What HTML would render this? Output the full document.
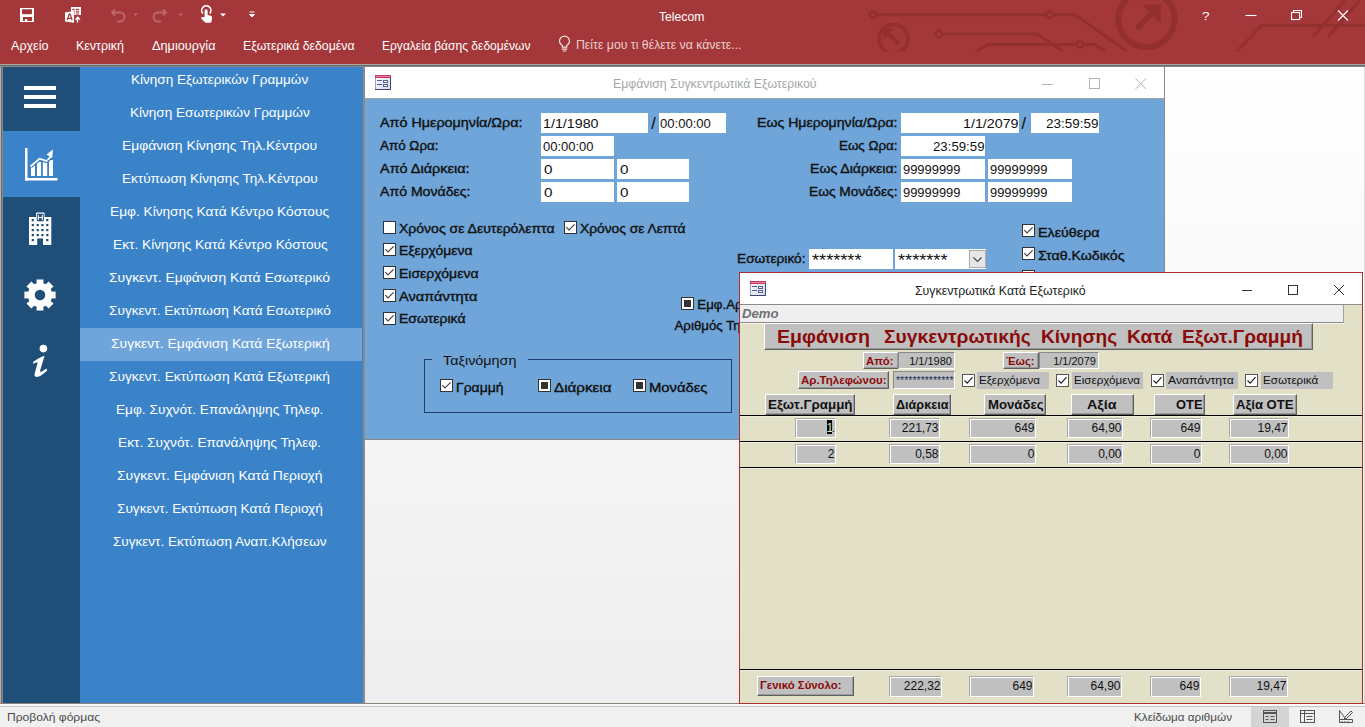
<!DOCTYPE html>
<html><head><meta charset="utf-8"><style>
html,body{margin:0;padding:0;width:1365px;height:727px;overflow:hidden;background:#fff;position:relative}
body>div,body>span,body>svg{position:absolute;box-sizing:border-box}
.t{white-space:pre;transform-origin:0 0;display:block}
</style></head><body>
<div style="left:0px;top:0px;width:1365px;height:64px;background:#A4373A"></div>
<svg style="left:0;top:0" width="1365" height="64" viewBox="0 0 1365 64">
<defs><clipPath id="cp"><rect x="0" y="0" width="1365" height="51.5"/></clipPath></defs>
<g stroke="#93302F" stroke-width="3" fill="none" clip-path="url(#cp)">
<circle cx="873" cy="14.7" r="3.3" stroke-width="2.4"/>
<path d="M876.3 14.7 H1046.7"/>
<circle cx="1050" cy="14.7" r="3.3" stroke-width="2.4"/>
<path d="M1053.3 14.7 H1075 L1128 52"/>
<circle cx="939" cy="34" r="3.3" stroke-width="2.4"/>
<path d="M942.3 34 H1037 L1064 52"/>
<path d="M975 52 L988 44.5 H1076.7"/>
<circle cx="1080" cy="44.5" r="3.3" stroke-width="2.4"/>
<path d="M1083.3 44.5 H1095 L1106 52"/>
<circle cx="893.5" cy="39" r="14.5" stroke-width="4"/>
<path d="M887 32 L899 44" stroke-width="4"/>
<path d="M883.5 28.5 H895 L883.5 40 Z" fill="#93302F" stroke="none"/>
<circle cx="1146.5" cy="19" r="28" stroke-width="6"/>
<path d="M1137 28.5 L1153 12.5" stroke-width="6"/>
<path d="M1161 4.5 V24 L1141.5 4.5 Z" fill="#93302F" stroke="none"/>
<path d="M1236 52 L1262 25.2 H1365"/>
<path d="M1313 37 L1345 0 M1328 37 L1360 0"/>
</g></svg>
<div style="left:0px;top:64px;width:1365px;height:1px;background:#A4A8A6"></div>
<div style="left:0px;top:65px;width:1365px;height:1px;background:#6B6B6B"></div>
<div style="left:0px;top:66px;width:1365px;height:1px;background:#8A8580"></div>
<div style="left:0px;top:67px;width:1px;height:636px;background:#B4B4B4"></div>
<div style="left:1px;top:67px;width:1px;height:636px;background:#6A6A6A"></div>
<div style="left:2px;top:67px;width:1px;height:636px;background:#8C8580"></div>
<div style="left:3px;top:67px;width:77px;height:638px;background:#1F4E79"></div>
<div style="left:3px;top:131px;width:77px;height:66px;background:#3A83C8"></div>
<div style="left:80px;top:67px;width:283px;height:636px;background:#3A83C8"></div>
<div style="left:80px;top:328px;width:282px;height:33px;background:#6FA5DA"></div>
<div style="left:363px;top:67px;width:2px;height:638px;background:#8A8A8A"></div>
<div style="left:0px;top:703px;width:1365px;height:1px;background:#8C8478"></div>
<div style="left:0px;top:704px;width:1365px;height:2px;background:#FAFAFA"></div>
<div style="left:0px;top:706px;width:1365px;height:1px;background:#C4C4C4"></div>
<div style="left:739px;top:703px;width:624px;height:1px;background:#AE2D2D"></div>
<div style="left:0px;top:707px;width:1365px;height:20px;background:#F0F0F0"></div>
<svg style="left:0;top:0" width="270" height="32" viewBox="0 0 270 32">
<g fill="#fff">
<path fill-rule="evenodd" d="M20 8 H34 V22 H20 Z M22 9.2 V13.5 L22.8 14.3 H31.2 L32 13.5 V9.2 Z M23 17 V21 H25 V19 H27.3 V21 H32 V17 Z"/>
</g>
<rect x="71" y="7" width="10" height="8" fill="#fff"/>
<g fill="#A4373A"><rect x="72.3" y="8.8" width="2.4" height="1.4"/><rect x="75.8" y="8.8" width="3.3" height="1.4"/>
<rect x="72.3" y="11.2" width="2.4" height="1.3"/><rect x="75.8" y="11.2" width="3.3" height="1.3"/>
<rect x="72.3" y="13.4" width="2.4" height="1.1"/><rect x="75.8" y="13.4" width="3.3" height="1.1"/></g>
<path d="M65 12.5 L74 11 V22.8 L65 21.5 Z" fill="#fff"/>
<path d="M67.2 20.2 L69.2 14.2 H70.2 L72.2 20.2 M68 18.3 H71.4" stroke="#A4373A" stroke-width="1.2" fill="none"/>
<path d="M77.5 22.5 V18 M75.6 19.6 L77.8 17.2 L80 19.6" stroke="#fff" stroke-width="1.4" fill="none"/>
<g stroke="#BE6567" stroke-width="2" fill="none">
<path d="M112 12.5 H120 A4.5 4.5 0 0 1 120 21.5 H117"/>
<path d="M115 9.5 L112 12.5 L115 15.5"/>
<path d="M166 12.5 H158 A4.5 4.5 0 0 0 158 21.5 H161"/>
<path d="M163 9.5 L166 12.5 L163 15.5"/>
</g>
<path d="M133 13.5 H138 L135.5 16 Z M178 13.5 H183 L180.5 16 Z" fill="#BE6567"/>
<path d="M102.8 13.5 A4.6 4.6 0 1 1 109.8 13.5" stroke="#fff" stroke-width="1.6" fill="none" transform="translate(100 0)"/>
<path fill="#fff" d="M204.6 17 V10.8 A1.5 1.5 0 0 1 207.6 10.8 V15 L210.8 15.8 A1.6 1.6 0 0 1 212 17.4 L211.6 21.2 A1.8 1.8 0 0 1 209.8 22.8 H206 A1.8 1.8 0 0 1 204.6 22.1 L201.2 18.6 A1.1 1.1 0 0 1 202.8 17.2 Z"/>
<path d="M220 13.5 H226 L223 16.5 Z" fill="#fff"/>
<path d="M249.5 12 H254.5 M249.5 14.5 H254.5 L252 17 Z" stroke="#fff" stroke-width="1" fill="#fff"/>
</svg>
<span class="t" style="left:659.00px;top:10.00px;font-family:'Liberation Sans';font-size:13px;line-height:13px;font-weight:400;font-style:normal;color:#FFFFFF;transform:scaleX(0.9355);">Telecom</span>
<svg style="left:1190;top:0" width="175" height="32" viewBox="1190 0 175 32">
<g stroke="#fff" stroke-width="1.1" fill="none">
<path d="M1245.5 15.5 H1256.5"/>
<rect x="1291.5" y="12.5" width="8" height="7"/>
<path d="M1293.5 12.5 V10.5 H1301.5 V17.5 H1299.5"/>
<path d="M1338 10.5 L1348 20.5 M1348 10.5 L1338 20.5"/>
</g></svg>
<span class="t" style="left:1201.50px;top:11.00px;font-family:'Liberation Sans';font-size:11px;line-height:11px;font-weight:400;font-style:normal;color:#FFFFFF;transform:scaleX(1.2245);">?</span>
<span class="t" style="left:10.50px;top:40.00px;font-family:'Liberation Sans';font-size:12.5px;line-height:12.5px;font-weight:400;font-style:normal;color:#FFFFFF;transform:scaleX(1.0050);">Αρχείο</span>
<span class="t" style="left:75.50px;top:40.00px;font-family:'Liberation Sans';font-size:12.5px;line-height:12.5px;font-weight:400;font-style:normal;color:#FFFFFF;transform:scaleX(0.9961);">Κεντρική</span>
<span class="t" style="left:151.50px;top:40.00px;font-family:'Liberation Sans';font-size:12.5px;line-height:12.5px;font-weight:400;font-style:normal;color:#FFFFFF;transform:scaleX(1.0170);">Δημιουργία</span>
<span class="t" style="left:242.50px;top:40.00px;font-family:'Liberation Sans';font-size:12.5px;line-height:12.5px;font-weight:400;font-style:normal;color:#FFFFFF;transform:scaleX(0.9832);">Εξωτερικά δεδομένα</span>
<span class="t" style="left:381.50px;top:40.00px;font-family:'Liberation Sans';font-size:12.5px;line-height:12.5px;font-weight:400;font-style:normal;color:#FFFFFF;transform:scaleX(0.9625);">Εργαλεία βάσης δεδομένων</span>
<svg style="left:555;top:34" width="20" height="22" viewBox="555 34 20 22">
<g stroke="#F4E4E4" stroke-width="1.2" fill="none">
<path d="M562.3 47.2 V45.6 C560.3 44.2 559.5 42.6 559.5 41.2 A5 5 0 0 1 569.5 41.2 C569.5 42.6 568.7 44.2 566.7 45.6 V47.2 Z"/>
<path d="M561.8 49.2 H567.2 M562.8 51 H566.2"/>
</g></svg>
<span class="t" style="left:575.50px;top:39.00px;font-family:'Liberation Sans';font-size:12.5px;line-height:12.5px;font-weight:400;font-style:normal;color:#EBCFCF;transform:scaleX(0.9829);">Πείτε μου τι θέλετε να κάνετε...</span>
<div style="left:24px;top:86px;width:32px;height:4px;background:#fff"></div>
<div style="left:24px;top:95px;width:32px;height:4px;background:#fff"></div>
<div style="left:24px;top:104px;width:32px;height:4px;background:#fff"></div>
<svg style="left:20;top:140" width="45" height="45" viewBox="20 140 45 45">
<g fill="#fff">
<rect x="25" y="148" width="2.5" height="32.5"/>
<rect x="25" y="178" width="32.5" height="2.5"/>
<path d="M31 167 L35 164 V176 H31 Z"/>
<rect x="37" y="162" width="4.3" height="14"/>
<rect x="42.8" y="162" width="4.5" height="14"/>
<rect x="49" y="160" width="4" height="16"/>
<path d="M30.5 166.5 L39.5 158.8 L47 161 L51 156" stroke="#3A83C8" stroke-width="4.2" fill="none"/>
<path d="M30.5 166.5 L39.5 158.8 L47 161 L51 156" stroke="#fff" stroke-width="1.8" fill="none"/>
<path d="M46.5 154.5 L53 149.5 L52.2 158 Z"/>
</g>
<g stroke="#3A83C8" stroke-width="1.1"><path d="M35.8 163 V177 M41.8 160 V177 M48.2 160 V177"/></g>
</svg>
<svg style="left:25;top:208" width="30" height="40" viewBox="25 208 30 40">
<path fill="#fff" d="M29 217 H36 V213.3 A0.8 0.8 0 0 1 36.8 212.5 H43.8 A0.8 0.8 0 0 1 44.6 213.3 V217 H51.3 V245 H43 V238.5 H37.2 V245 H29 Z"/>
<g fill="#1F4E79">
<rect x="36.8" y="213.7" width="7" height="7.6" rx="1"/>
</g>
<g fill="#1F4E79">
<rect x="31.7" y="219" width="2.2" height="2.2"/><rect x="46.2" y="219" width="2.2" height="2.2"/>
<path d="M38.3 215 V220 M42.3 215 V220 M38.3 217.5 H42.3" stroke="#fff" stroke-width="1.1"/>
<rect x="31.7" y="224" width="2.2" height="2.2"/><rect x="36.6" y="224" width="2.2" height="2.2"/><rect x="41.3" y="224" width="2.2" height="2.2"/><rect x="46.2" y="224" width="2.2" height="2.2"/>
<rect x="31.7" y="229" width="2.2" height="2.2"/><rect x="36.6" y="229" width="2.2" height="2.2"/><rect x="41.3" y="229" width="2.2" height="2.2"/><rect x="46.2" y="229" width="2.2" height="2.2"/>
<rect x="31.7" y="234" width="2.2" height="2.2"/><rect x="36.6" y="234" width="2.2" height="2.2"/><rect x="41.3" y="234" width="2.2" height="2.2"/><rect x="46.2" y="234" width="2.2" height="2.2"/>
<rect x="31.7" y="239" width="2.2" height="2.2"/><rect x="46.2" y="239" width="2.2" height="2.2"/>
</g></svg>
<svg style="left:20;top:275" width="40" height="40" viewBox="20 275 40 40"><path fill="#fff" fill-rule="evenodd" d="M36.69,283.26 L36.51,279.39 L43.49,279.39 L43.31,283.26 L44.67,283.73 L45.96,284.35 L48.57,281.49 L53.51,286.43 L50.65,289.04 L51.27,290.33 L51.74,291.69 L55.61,291.51 L55.61,298.49 L51.74,298.31 L51.27,299.67 L50.65,300.96 L53.51,303.57 L48.57,308.51 L45.96,305.65 L44.67,306.27 L43.31,306.74 L43.49,310.61 L36.51,310.61 L36.69,306.74 L35.33,306.27 L34.04,305.65 L31.43,308.51 L26.49,303.57 L29.35,300.96 L28.73,299.67 L28.26,298.31 L24.39,298.49 L24.39,291.51 L28.26,291.69 L28.73,290.33 L29.35,289.04 L26.49,286.43 L31.43,281.49 L34.04,284.35 L35.33,283.73 Z M40 295 m-5.3 0 a5.3 5.3 0 1 0 10.6 0 a5.3 5.3 0 1 0 -10.6 0 Z"/></svg>
<svg style="left:25;top:340" width="30" height="40" viewBox="25 340 30 40">
<g fill="#fff">
<circle cx="43.4" cy="348.6" r="3.8"/>
<path d="M32.8 362.6 C35.5 359.8 40 357.3 44.6 355.8 L40.2 370.2 C39.8 371.8 40.6 372.3 42 371.4 L46.4 368.4 L47.2 370.4 C43.4 374 39.6 376.9 36.4 376.9 C34.6 376.9 34.2 375.6 34.7 373.6 L37.6 363 C37 362.2 35.6 362.5 33.8 363.8 Z"/>
</g></svg>
<span class="t" style="left:131.10px;top:73.00px;font-family:'Liberation Sans';font-size:13px;line-height:13px;font-weight:400;font-style:normal;color:#FFFFFF;transform:scaleX(1.0415);">Κίνηση Εξωτερικών Γραμμών</span>
<span class="t" style="left:130.10px;top:106.00px;font-family:'Liberation Sans';font-size:13px;line-height:13px;font-weight:400;font-style:normal;color:#FFFFFF;transform:scaleX(1.0427);">Κίνηση Εσωτερικών Γραμμών</span>
<span class="t" style="left:121.70px;top:139.00px;font-family:'Liberation Sans';font-size:13px;line-height:13px;font-weight:400;font-style:normal;color:#FFFFFF;transform:scaleX(1.0672);">Εμφάνιση Κίνησης Τηλ.Κέντρου</span>
<span class="t" style="left:121.70px;top:172.00px;font-family:'Liberation Sans';font-size:13px;line-height:13px;font-weight:400;font-style:normal;color:#FFFFFF;transform:scaleX(1.0438);">Εκτύπωση Κίνησης Τηλ.Κέντρου</span>
<span class="t" style="left:110.00px;top:205.00px;font-family:'Liberation Sans';font-size:13px;line-height:13px;font-weight:400;font-style:normal;color:#FFFFFF;transform:scaleX(1.0529);">Εμφ. Κίνησης Κατά Κέντρο Κόστους</span>
<span class="t" style="left:112.50px;top:238.00px;font-family:'Liberation Sans';font-size:13px;line-height:13px;font-weight:400;font-style:normal;color:#FFFFFF;transform:scaleX(1.0534);">Εκτ. Κίνησης Κατά Κέντρο Κόστους</span>
<span class="t" style="left:108.70px;top:271.00px;font-family:'Liberation Sans';font-size:13px;line-height:13px;font-weight:400;font-style:normal;color:#FFFFFF;transform:scaleX(1.0696);">Συγκεντ. Εμφάνιση Κατά Εσωτερικό</span>
<span class="t" style="left:108.70px;top:304.00px;font-family:'Liberation Sans';font-size:13px;line-height:13px;font-weight:400;font-style:normal;color:#FFFFFF;transform:scaleX(1.0483);">Συγκεντ. Εκτύπωση Κατά Εσωτερικό</span>
<span class="t" style="left:110.90px;top:337.00px;font-family:'Liberation Sans';font-size:13px;line-height:13px;font-weight:400;font-style:normal;color:#FFFFFF;transform:scaleX(1.0685);">Συγκεντ. Εμφάνιση Κατά Εξωτερική</span>
<span class="t" style="left:109.00px;top:370.00px;font-family:'Liberation Sans';font-size:13px;line-height:13px;font-weight:400;font-style:normal;color:#FFFFFF;transform:scaleX(1.0547);">Συγκεντ. Εκτύπωση Κατά Εξωτερική</span>
<span class="t" style="left:116.00px;top:403.00px;font-family:'Liberation Sans';font-size:13px;line-height:13px;font-weight:400;font-style:normal;color:#FFFFFF;transform:scaleX(1.0522);">Εμφ. Συχνότ. Επανάληψης Τηλεφ.</span>
<span class="t" style="left:118.20px;top:436.00px;font-family:'Liberation Sans';font-size:13px;line-height:13px;font-weight:400;font-style:normal;color:#FFFFFF;transform:scaleX(1.0528);">Εκτ. Συχνότ. Επανάληψης Τηλεφ.</span>
<span class="t" style="left:116.70px;top:469.00px;font-family:'Liberation Sans';font-size:13px;line-height:13px;font-weight:400;font-style:normal;color:#FFFFFF;transform:scaleX(1.0727);">Συγκεντ. Εμφάνιση Κατά Περιοχή</span>
<span class="t" style="left:116.50px;top:502.00px;font-family:'Liberation Sans';font-size:13px;line-height:13px;font-weight:400;font-style:normal;color:#FFFFFF;transform:scaleX(1.0472);">Συγκεντ. Εκτύπωση Κατά Περιοχή</span>
<span class="t" style="left:113.20px;top:535.00px;font-family:'Liberation Sans';font-size:13px;line-height:13px;font-weight:400;font-style:normal;color:#FFFFFF;transform:scaleX(1.0404);">Συγκεντ. Εκτύπωση Αναπ.Κλήσεων</span>
<div style="left:365px;top:67px;width:1000px;height:636px;background:linear-gradient(#FFFFFF,#EEEEEE)"></div>
<div style="left:365px;top:67px;width:800px;height:31px;background:#fff"></div>
<div style="left:365px;top:98px;width:800px;height:1px;background:#A0A0A0"></div>
<div style="left:365px;top:99px;width:800px;height:341px;background:#6FA5D9"></div>
<div style="left:1164px;top:67px;width:1px;height:373px;background:#8A8A8A"></div>
<div style="left:365px;top:439px;width:800px;height:1px;background:#8A8A8A"></div>
<div style="left:1364px;top:67px;width:1px;height:636px;background:#DCDCDC"></div>
<svg style="left:375px;top:75px" width="16" height="15" viewBox="0 0 16 15" shape-rendering="crispEdges">
<defs><linearGradient id="fg375" x1="0" y1="0" x2="1" y2="1"><stop offset="0" stop-color="#FFFFFF"/><stop offset="1" stop-color="#D4D6EE"/></linearGradient></defs>
<rect x="0" y="0" width="16" height="15" fill="url(#fg375)"/>
<rect x="0" y="0" width="16" height="3" fill="#C63A64"/>
<rect x="1" y="1" width="14" height="1" fill="#E6809C"/>
<rect x="0" y="3" width="1" height="12" fill="#9A9CC4"/>
<rect x="15" y="3" width="1" height="12" fill="#3C4A72"/>
<rect x="0" y="14" width="16" height="1" fill="#3C4A72"/>
<rect x="2" y="5" width="5" height="1" fill="#4A5C9C"/>
<rect x="2" y="9" width="5" height="1" fill="#4A5C9C"/>
<rect x="8" y="5" width="5" height="3" fill="#56628E"/>
<rect x="9" y="6" width="3" height="1" fill="#fff"/>
<rect x="8" y="9" width="5" height="3" fill="#56628E"/>
<rect x="9" y="10" width="3" height="1" fill="#fff"/>
</svg>
<span class="t" style="left:612.50px;top:78.00px;font-family:'Liberation Sans';font-size:12.5px;line-height:12.5px;font-weight:400;font-style:normal;color:#A6A6A6;transform:scaleX(0.9837);">Εμφάνιση Συγκεντρωτικά Εξωτερικού</span>
<svg style="left:1035;top:70" width="125" height="25" viewBox="1035 70 125 25">
<g stroke="#B3B3B3" stroke-width="1" fill="none">
<path d="M1042 84.5 H1053"/>
<rect x="1089.5" y="78.5" width="10" height="10"/>
<path d="M1135.5 78.5 L1146 89 M1146 78.5 L1135.5 89"/>
</g></svg>
<span class="t" style="left:379.50px;top:116.00px;font-family:'Liberation Sans';font-size:13.3px;line-height:13.3px;font-weight:400;font-style:normal;color:#111;transform:scaleX(1.0778);-webkit-text-stroke:0.38px #111;">Από Ημερομηνία/Ωρα:</span>
<span class="t" style="left:379.50px;top:139.00px;font-family:'Liberation Sans';font-size:13.3px;line-height:13.3px;font-weight:400;font-style:normal;color:#111;transform:scaleX(1.0081);-webkit-text-stroke:0.38px #111;">Από Ωρα:</span>
<span class="t" style="left:379.50px;top:162.00px;font-family:'Liberation Sans';font-size:13.3px;line-height:13.3px;font-weight:400;font-style:normal;color:#111;transform:scaleX(1.0861);-webkit-text-stroke:0.38px #111;">Από Διάρκεια:</span>
<span class="t" style="left:379.50px;top:185.00px;font-family:'Liberation Sans';font-size:13.3px;line-height:13.3px;font-weight:400;font-style:normal;color:#111;transform:scaleX(1.0600);-webkit-text-stroke:0.38px #111;">Από Μονάδες:</span>
<div style="left:541px;top:113px;width:107px;height:20px;background:#fff"></div>
<div style="left:659px;top:113px;width:67px;height:20px;background:#fff"></div>
<span class="t" style="left:651.15px;top:116.00px;font-family:'Liberation Sans';font-size:16px;line-height:16px;font-weight:400;font-style:normal;color:#111;transform:scaleX(1.0000);-webkit-text-stroke:0.15px #111;">/</span>
<div style="left:541px;top:136px;width:73px;height:20px;background:#fff"></div>
<div style="left:541px;top:159px;width:73px;height:20px;background:#fff"></div>
<div style="left:617px;top:159px;width:72px;height:20px;background:#fff"></div>
<div style="left:541px;top:182px;width:73px;height:20px;background:#fff"></div>
<div style="left:617px;top:182px;width:72px;height:20px;background:#fff"></div>
<span class="t" style="left:542.50px;top:117.00px;font-family:'Liberation Sans';font-size:13px;line-height:13px;font-weight:400;font-style:normal;color:#111;transform:scaleX(1.0966);">1/1/1980</span>
<span class="t" style="left:659.70px;top:117.00px;font-family:'Liberation Sans';font-size:13px;line-height:13px;font-weight:400;font-style:normal;color:#111;transform:scaleX(1.0038);">00:00:00</span>
<span class="t" style="left:542.50px;top:140.00px;font-family:'Liberation Sans';font-size:13px;line-height:13px;font-weight:400;font-style:normal;color:#111;transform:scaleX(0.9978);">00:00:00</span>
<span class="t" style="left:543.50px;top:163.00px;font-family:'Liberation Sans';font-size:13px;line-height:13px;font-weight:400;font-style:normal;color:#111;transform:scaleX(1.1749);">0</span>
<span class="t" style="left:619.50px;top:163.00px;font-family:'Liberation Sans';font-size:13px;line-height:13px;font-weight:400;font-style:normal;color:#111;transform:scaleX(1.1749);">0</span>
<span class="t" style="left:543.50px;top:186.00px;font-family:'Liberation Sans';font-size:13px;line-height:13px;font-weight:400;font-style:normal;color:#111;transform:scaleX(1.1749);">0</span>
<span class="t" style="left:619.50px;top:186.00px;font-family:'Liberation Sans';font-size:13px;line-height:13px;font-weight:400;font-style:normal;color:#111;transform:scaleX(1.1749);">0</span>
<span class="t" style="left:756.50px;top:116.00px;font-family:'Liberation Sans';font-size:13.3px;line-height:13.3px;font-weight:400;font-style:normal;color:#111;transform:scaleX(1.0609);-webkit-text-stroke:0.38px #111;">Εως Ημερομηνία/Ωρα:</span>
<span class="t" style="left:838.50px;top:139.00px;font-family:'Liberation Sans';font-size:13.3px;line-height:13.3px;font-weight:400;font-style:normal;color:#111;transform:scaleX(1.0043);-webkit-text-stroke:0.38px #111;">Εως Ωρα:</span>
<span class="t" style="left:809.50px;top:162.00px;font-family:'Liberation Sans';font-size:13.3px;line-height:13.3px;font-weight:400;font-style:normal;color:#111;transform:scaleX(1.0590);-webkit-text-stroke:0.38px #111;">Εως Διάρκεια:</span>
<span class="t" style="left:808.50px;top:185.00px;font-family:'Liberation Sans';font-size:13.3px;line-height:13.3px;font-weight:400;font-style:normal;color:#111;transform:scaleX(1.0340);-webkit-text-stroke:0.38px #111;">Εως Μονάδες:</span>
<div style="left:901px;top:113px;width:118px;height:20px;background:#fff"></div>
<div style="left:1031px;top:113px;width:68px;height:20px;background:#fff"></div>
<span class="t" style="left:1021.55px;top:116.00px;font-family:'Liberation Sans';font-size:16px;line-height:16px;font-weight:400;font-style:normal;color:#111;transform:scaleX(1.0000);-webkit-text-stroke:0.15px #111;">/</span>
<div style="left:901px;top:136px;width:84px;height:20px;background:#fff"></div>
<div style="left:901px;top:159px;width:84px;height:20px;background:#fff"></div>
<div style="left:988px;top:159px;width:84px;height:20px;background:#fff"></div>
<div style="left:901px;top:182px;width:84px;height:20px;background:#fff"></div>
<div style="left:988px;top:182px;width:84px;height:20px;background:#fff"></div>
<span class="t" style="left:962.50px;top:117.00px;font-family:'Liberation Sans';font-size:13px;line-height:13px;font-weight:400;font-style:normal;color:#111;transform:scaleX(1.0966);">1/1/2079</span>
<span class="t" style="left:1045.50px;top:117.00px;font-family:'Liberation Sans';font-size:13px;line-height:13px;font-weight:400;font-style:normal;color:#111;transform:scaleX(1.0374);">23:59:59</span>
<span class="t" style="left:932.50px;top:140.00px;font-family:'Liberation Sans';font-size:13px;line-height:13px;font-weight:400;font-style:normal;color:#111;transform:scaleX(1.0176);">23:59:59</span>
<span class="t" style="left:902.50px;top:163.00px;font-family:'Liberation Sans';font-size:13px;line-height:13px;font-weight:400;font-style:normal;color:#111;transform:scaleX(0.9941);">99999999</span>
<span class="t" style="left:989.50px;top:163.00px;font-family:'Liberation Sans';font-size:13px;line-height:13px;font-weight:400;font-style:normal;color:#111;transform:scaleX(0.9941);">99999999</span>
<span class="t" style="left:902.50px;top:186.00px;font-family:'Liberation Sans';font-size:13px;line-height:13px;font-weight:400;font-style:normal;color:#111;transform:scaleX(0.9941);">99999999</span>
<span class="t" style="left:989.50px;top:186.00px;font-family:'Liberation Sans';font-size:13px;line-height:13px;font-weight:400;font-style:normal;color:#111;transform:scaleX(0.9941);">99999999</span>
<svg style="left:383px;top:221px" width="13" height="13" viewBox="0 0 13 13">
<rect x="0.5" y="0.5" width="12" height="12" fill="#fff" stroke="#333" stroke-width="1"/>
</svg>
<span class="t" style="left:398.50px;top:222.00px;font-family:'Liberation Sans';font-size:13.3px;line-height:13.3px;font-weight:400;font-style:normal;color:#111;transform:scaleX(1.0539);-webkit-text-stroke:0.38px #111;">Χρόνος σε Δευτερόλεπτα</span>
<svg style="left:564px;top:221px" width="13" height="13" viewBox="0 0 13 13">
<rect x="0.5" y="0.5" width="12" height="12" fill="#fff" stroke="#333" stroke-width="1"/>
<path d="M2.3 6.2 L5 9 L10.6 3.4" stroke="#444" stroke-width="1.15" fill="none"/></svg>
<span class="t" style="left:579.50px;top:222.00px;font-family:'Liberation Sans';font-size:13.3px;line-height:13.3px;font-weight:400;font-style:normal;color:#111;transform:scaleX(1.0362);-webkit-text-stroke:0.38px #111;">Χρόνος σε Λεπτά</span>
<svg style="left:383px;top:243px" width="13" height="13" viewBox="0 0 13 13">
<rect x="0.5" y="0.5" width="12" height="12" fill="#fff" stroke="#333" stroke-width="1"/>
<path d="M2.3 6.2 L5 9 L10.6 3.4" stroke="#444" stroke-width="1.15" fill="none"/></svg>
<span class="t" style="left:398.50px;top:244.00px;font-family:'Liberation Sans';font-size:13.3px;line-height:13.3px;font-weight:400;font-style:normal;color:#111;transform:scaleX(1.0460);-webkit-text-stroke:0.38px #111;">Εξερχόμενα</span>
<svg style="left:383px;top:266px" width="13" height="13" viewBox="0 0 13 13">
<rect x="0.5" y="0.5" width="12" height="12" fill="#fff" stroke="#333" stroke-width="1"/>
<path d="M2.3 6.2 L5 9 L10.6 3.4" stroke="#444" stroke-width="1.15" fill="none"/></svg>
<span class="t" style="left:398.50px;top:267.00px;font-family:'Liberation Sans';font-size:13.3px;line-height:13.3px;font-weight:400;font-style:normal;color:#111;transform:scaleX(1.0534);-webkit-text-stroke:0.38px #111;">Εισερχόμενα</span>
<svg style="left:383px;top:289px" width="13" height="13" viewBox="0 0 13 13">
<rect x="0.5" y="0.5" width="12" height="12" fill="#fff" stroke="#333" stroke-width="1"/>
<path d="M2.3 6.2 L5 9 L10.6 3.4" stroke="#444" stroke-width="1.15" fill="none"/></svg>
<span class="t" style="left:398.50px;top:290.00px;font-family:'Liberation Sans';font-size:13.3px;line-height:13.3px;font-weight:400;font-style:normal;color:#111;transform:scaleX(1.0950);-webkit-text-stroke:0.38px #111;">Αναπάντητα</span>
<svg style="left:383px;top:312px" width="13" height="13" viewBox="0 0 13 13">
<rect x="0.5" y="0.5" width="12" height="12" fill="#fff" stroke="#333" stroke-width="1"/>
<path d="M2.3 6.2 L5 9 L10.6 3.4" stroke="#444" stroke-width="1.15" fill="none"/></svg>
<span class="t" style="left:398.50px;top:312.00px;font-family:'Liberation Sans';font-size:13.3px;line-height:13.3px;font-weight:400;font-style:normal;color:#111;transform:scaleX(1.0529);-webkit-text-stroke:0.38px #111;">Εσωτερικά</span>
<svg style="left:681px;top:297px" width="13" height="13" viewBox="0 0 13 13">
<rect x="0.5" y="0.5" width="12" height="12" fill="#fff" stroke="#333" stroke-width="1"/>
<rect x="3" y="3" width="7" height="7" fill="#333"/></svg>
<span class="t" style="left:697.30px;top:298.00px;font-family:'Liberation Sans';font-size:13.3px;line-height:13.3px;font-weight:400;font-style:normal;color:#111;transform:scaleX(1.0000);-webkit-text-stroke:0.38px #111;">Εμφ.Αριθμού</span>
<span class="t" style="left:674.50px;top:319.00px;font-family:'Liberation Sans';font-size:13.3px;line-height:13.3px;font-weight:400;font-style:normal;color:#111;transform:scaleX(1.0000);-webkit-text-stroke:0.38px #111;">Αριθμός Τηλ.</span>
<div style="left:424px;top:359px;width:308px;height:54px;border:1px solid #1F3B70"></div>
<div style="left:432px;top:352px;width:96px;height:14px;background:#6FA5D9"></div>
<span class="t" style="left:442.50px;top:354.00px;font-family:'Liberation Sans';font-size:13px;line-height:13px;font-weight:400;font-style:normal;color:#111;transform:scaleX(1.1060);">Ταξινόμηση</span>
<svg style="left:440px;top:379px" width="13" height="13" viewBox="0 0 13 13">
<rect x="0.5" y="0.5" width="12" height="12" fill="#fff" stroke="#333" stroke-width="1"/>
<path d="M2.3 6.2 L5 9 L10.6 3.4" stroke="#444" stroke-width="1.15" fill="none"/></svg>
<span class="t" style="left:455.50px;top:381.00px;font-family:'Liberation Sans';font-size:13.3px;line-height:13.3px;font-weight:400;font-style:normal;color:#111;transform:scaleX(1.0486);-webkit-text-stroke:0.38px #111;">Γραμμή</span>
<svg style="left:538px;top:379px" width="13" height="13" viewBox="0 0 13 13">
<rect x="0.5" y="0.5" width="12" height="12" fill="#fff" stroke="#333" stroke-width="1"/>
<rect x="3" y="3" width="7" height="7" fill="#333"/></svg>
<span class="t" style="left:553.50px;top:381.00px;font-family:'Liberation Sans';font-size:13.3px;line-height:13.3px;font-weight:400;font-style:normal;color:#111;transform:scaleX(1.1429);-webkit-text-stroke:0.38px #111;">Διάρκεια</span>
<svg style="left:633px;top:379px" width="13" height="13" viewBox="0 0 13 13">
<rect x="0.5" y="0.5" width="12" height="12" fill="#fff" stroke="#333" stroke-width="1"/>
<rect x="3" y="3" width="7" height="7" fill="#333"/></svg>
<span class="t" style="left:648.50px;top:381.00px;font-family:'Liberation Sans';font-size:13.3px;line-height:13.3px;font-weight:400;font-style:normal;color:#111;transform:scaleX(1.1133);-webkit-text-stroke:0.38px #111;">Μονάδες</span>
<span class="t" style="left:736.50px;top:252.00px;font-family:'Liberation Sans';font-size:13.3px;line-height:13.3px;font-weight:400;font-style:normal;color:#111;transform:scaleX(1.0293);-webkit-text-stroke:0.38px #111;">Εσωτερικό:</span>
<div style="left:809px;top:249px;width:84px;height:20px;background:#fff"></div>
<div style="left:895px;top:249px;width:91px;height:20px;background:#fff"></div>
<span class="t" style="left:811.50px;top:252.00px;font-family:'Liberation Sans';font-size:17px;line-height:17px;font-weight:400;font-style:normal;color:#111;transform:scaleX(1.0688);">*******</span>
<span class="t" style="left:897.50px;top:252.00px;font-family:'Liberation Sans';font-size:17px;line-height:17px;font-weight:400;font-style:normal;color:#111;transform:scaleX(1.0688);">*******</span>
<div style="left:969px;top:250px;width:17px;height:18px;background:#E6E6E6;border:1px solid #ADADAD"></div>
<svg style="left:969px;top:250px" width="17" height="18" viewBox="0 0 17 18"><path d="M4.5 7.5 L8.5 11.5 L12.5 7.5" stroke="#444" stroke-width="1.1" fill="none"/></svg>
<svg style="left:1022px;top:224px" width="13" height="13" viewBox="0 0 13 13">
<rect x="0.5" y="0.5" width="12" height="12" fill="#fff" stroke="#333" stroke-width="1"/>
<path d="M2.3 6.2 L5 9 L10.6 3.4" stroke="#444" stroke-width="1.15" fill="none"/></svg>
<span class="t" style="left:1037.50px;top:226.00px;font-family:'Liberation Sans';font-size:13.3px;line-height:13.3px;font-weight:400;font-style:normal;color:#111;transform:scaleX(1.0734);-webkit-text-stroke:0.38px #111;">Ελεύθερα</span>
<svg style="left:1022px;top:247px" width="13" height="13" viewBox="0 0 13 13">
<rect x="0.5" y="0.5" width="12" height="12" fill="#fff" stroke="#333" stroke-width="1"/>
<path d="M2.3 6.2 L5 9 L10.6 3.4" stroke="#444" stroke-width="1.15" fill="none"/></svg>
<span class="t" style="left:1037.50px;top:249.00px;font-family:'Liberation Sans';font-size:13.3px;line-height:13.3px;font-weight:400;font-style:normal;color:#111;transform:scaleX(1.0656);-webkit-text-stroke:0.38px #111;">Σταθ.Κωδικός</span>
<svg style="left:1022px;top:270px" width="13" height="13" viewBox="0 0 13 13">
<rect x="0.5" y="0.5" width="12" height="12" fill="#fff" stroke="#333" stroke-width="1"/>
<path d="M2.3 6.2 L5 9 L10.6 3.4" stroke="#444" stroke-width="1.15" fill="none"/></svg>
<div style="left:739px;top:272px;width:624px;height:432px;border:1px solid #AE2D2D;background:#E2E0C6"></div>
<div style="left:740px;top:273px;width:622px;height:31px;background:#fff"></div>
<div style="left:740px;top:304px;width:622px;height:1px;background:#8C8C8C"></div>
<div style="left:740px;top:305px;width:604px;height:18px;background:#EFEFF0;border-right:1px solid #A0A0A0;border-bottom:1px solid #8A8A8A"></div>
<div style="left:740px;top:323px;width:605px;height:1px;background:#F8F8F0"></div>
<svg style="left:750px;top:281px" width="16" height="15" viewBox="0 0 16 15" shape-rendering="crispEdges">
<defs><linearGradient id="fg750" x1="0" y1="0" x2="1" y2="1"><stop offset="0" stop-color="#FFFFFF"/><stop offset="1" stop-color="#D4D6EE"/></linearGradient></defs>
<rect x="0" y="0" width="16" height="15" fill="url(#fg750)"/>
<rect x="0" y="0" width="16" height="3" fill="#C63A64"/>
<rect x="1" y="1" width="14" height="1" fill="#E6809C"/>
<rect x="0" y="3" width="1" height="12" fill="#9A9CC4"/>
<rect x="15" y="3" width="1" height="12" fill="#3C4A72"/>
<rect x="0" y="14" width="16" height="1" fill="#3C4A72"/>
<rect x="2" y="5" width="5" height="1" fill="#4A5C9C"/>
<rect x="2" y="9" width="5" height="1" fill="#4A5C9C"/>
<rect x="8" y="5" width="5" height="3" fill="#56628E"/>
<rect x="9" y="6" width="3" height="1" fill="#fff"/>
<rect x="8" y="9" width="5" height="3" fill="#56628E"/>
<rect x="9" y="10" width="3" height="1" fill="#fff"/>
</svg>
<span class="t" style="left:914.50px;top:285.00px;font-family:'Liberation Sans';font-size:12.5px;line-height:12.5px;font-weight:400;font-style:normal;color:#222;transform:scaleX(0.9863);">Συγκεντρωτικά Κατά Εξωτερικό</span>
<svg style="left:1235;top:278" width="120" height="25" viewBox="1235 278 120 25">
<g stroke="#333" stroke-width="1" fill="none">
<path d="M1242 290.5 H1252"/>
<rect x="1288.5" y="285.5" width="9" height="9"/>
<path d="M1334 285 L1344 295 M1344 285 L1334 295"/>
</g></svg>
<span class="t" style="left:741.50px;top:308.00px;font-family:'Liberation Sans';font-size:12.5px;line-height:12.5px;font-weight:700;font-style:italic;color:#707070;transform:scaleX(1.0508);">Demo</span>
<div style="left:764px;top:323px;width:549px;height:27px;background:#C0C0C0;border-top:1px solid #fff;border-left:1px solid #fff;border-right:1px solid #606060;border-bottom:1px solid #606060;box-shadow:inset -1px -1px 0 #9A9A9A"></div>
<span class="t" style="left:777.10px;top:328.00px;font-family:'Liberation Sans';font-size:18.5px;line-height:18.5px;font-weight:700;font-style:normal;color:#8B0A0A;transform:scaleX(1.0598);">Εμφάνιση</span>
<span class="t" style="left:884.30px;top:328.00px;font-family:'Liberation Sans';font-size:18.5px;line-height:18.5px;font-weight:700;font-style:normal;color:#8B0A0A;transform:scaleX(1.0404);">Συγκεντρωτικής</span>
<span class="t" style="left:1040.50px;top:328.00px;font-family:'Liberation Sans';font-size:18.5px;line-height:18.5px;font-weight:700;font-style:normal;color:#8B0A0A;transform:scaleX(1.0330);">Κίνησης</span>
<span class="t" style="left:1126.50px;top:328.00px;font-family:'Liberation Sans';font-size:18.5px;line-height:18.5px;font-weight:700;font-style:normal;color:#8B0A0A;transform:scaleX(1.0475);">Κατά</span>
<span class="t" style="left:1182.10px;top:328.00px;font-family:'Liberation Sans';font-size:18.5px;line-height:18.5px;font-weight:700;font-style:normal;color:#8B0A0A;transform:scaleX(1.0336);">Εξωτ.Γραμμή</span>
<div style="left:863px;top:352px;width:36px;height:17px;background:#C0C0C0;border-top:1px solid #fff;border-left:1px solid #fff;border-right:1px solid #606060;border-bottom:1px solid #606060;box-shadow:inset -1px -1px 0 #9A9A9A"></div>
<span class="t" style="left:865.50px;top:356.00px;font-family:'Liberation Sans';font-size:11px;line-height:11px;font-weight:700;font-style:normal;color:#8B0A0A;transform:scaleX(1.0280);">Από:</span>
<div style="left:898px;top:352px;width:57px;height:17px;background:#C0C0C0;border-top:1px solid #8A8A8A;border-left:1px solid #8A8A8A;border-right:1px solid #fff;border-bottom:1px solid #fff"></div>
<span class="t" style="left:909.17px;top:356.00px;font-family:'Liberation Sans';font-size:11px;line-height:11px;font-weight:400;font-style:normal;color:#111;transform:scaleX(1.0000);">1/1/1980</span>
<div style="left:1003px;top:352px;width:36px;height:17px;background:#C0C0C0;border-top:1px solid #fff;border-left:1px solid #fff;border-right:1px solid #606060;border-bottom:1px solid #606060;box-shadow:inset -1px -1px 0 #9A9A9A"></div>
<span class="t" style="left:1005.50px;top:356.00px;font-family:'Liberation Sans';font-size:11px;line-height:11px;font-weight:700;font-style:normal;color:#8B0A0A;transform:scaleX(1.0156);">Έως:</span>
<div style="left:1039px;top:352px;width:60px;height:17px;background:#C0C0C0;border-top:1px solid #8A8A8A;border-left:1px solid #8A8A8A;border-right:1px solid #fff;border-bottom:1px solid #fff"></div>
<span class="t" style="left:1053.17px;top:356.00px;font-family:'Liberation Sans';font-size:11px;line-height:11px;font-weight:400;font-style:normal;color:#111;transform:scaleX(1.0000);">1/1/2079</span>
<div style="left:798px;top:371px;width:91px;height:18px;background:#C0C0C0;border-top:1px solid #fff;border-left:1px solid #fff;border-right:1px solid #606060;border-bottom:1px solid #606060;box-shadow:inset -1px -1px 0 #9A9A9A"></div>
<span class="t" style="left:800.50px;top:375.00px;font-family:'Liberation Sans';font-size:11px;line-height:11px;font-weight:700;font-style:normal;color:#8B0A0A;transform:scaleX(1.0447);">Αρ.Τηλεφώνου:</span>
<div style="left:893px;top:371px;width:62px;height:18px;background:#C0C0C0;border-top:1px solid #8A8A8A;border-left:1px solid #8A8A8A;border-right:1px solid #fff;border-bottom:1px solid #fff"></div>
<span class="t" style="left:895.50px;top:375.00px;font-family:'Liberation Sans';font-size:11px;line-height:11px;font-weight:400;font-style:normal;color:#1A2A5A;transform:scaleX(0.9593);">**************</span>
<svg style="left:962px;top:374px" width="13" height="13" viewBox="0 0 13 13">
<rect x="0.5" y="0.5" width="12" height="12" fill="#fff" stroke="#555" stroke-width="1"/>
<path d="M2.5 6.5 L5.2 9.2 L10.5 3.2" stroke="#222" stroke-width="1.2" fill="none"/></svg>
<div style="left:977px;top:372px;width:72px;height:17px;background:#C0C0C0"></div>
<span class="t" style="left:978.80px;top:375.00px;font-family:'Liberation Sans';font-size:11.5px;line-height:11.5px;font-weight:400;font-style:normal;color:#111;transform:scaleX(1.0006);">Εξερχόμενα</span>
<svg style="left:1056px;top:374px" width="13" height="13" viewBox="0 0 13 13">
<rect x="0.5" y="0.5" width="12" height="12" fill="#fff" stroke="#555" stroke-width="1"/>
<path d="M2.5 6.5 L5.2 9.2 L10.5 3.2" stroke="#222" stroke-width="1.2" fill="none"/></svg>
<div style="left:1072px;top:372px;width:71px;height:17px;background:#C0C0C0"></div>
<span class="t" style="left:1074.00px;top:375.00px;font-family:'Liberation Sans';font-size:11.5px;line-height:11.5px;font-weight:400;font-style:normal;color:#111;transform:scaleX(1.0110);">Εισερχόμενα</span>
<svg style="left:1151px;top:374px" width="13" height="13" viewBox="0 0 13 13">
<rect x="0.5" y="0.5" width="12" height="12" fill="#fff" stroke="#555" stroke-width="1"/>
<path d="M2.5 6.5 L5.2 9.2 L10.5 3.2" stroke="#222" stroke-width="1.2" fill="none"/></svg>
<div style="left:1166px;top:372px;width:72px;height:17px;background:#C0C0C0"></div>
<span class="t" style="left:1167.50px;top:375.00px;font-family:'Liberation Sans';font-size:11.5px;line-height:11.5px;font-weight:400;font-style:normal;color:#111;transform:scaleX(1.0613);">Αναπάντητα</span>
<svg style="left:1245px;top:374px" width="13" height="13" viewBox="0 0 13 13">
<rect x="0.5" y="0.5" width="12" height="12" fill="#fff" stroke="#555" stroke-width="1"/>
<path d="M2.5 6.5 L5.2 9.2 L10.5 3.2" stroke="#222" stroke-width="1.2" fill="none"/></svg>
<div style="left:1261px;top:372px;width:72px;height:17px;background:#C0C0C0"></div>
<span class="t" style="left:1262.90px;top:375.00px;font-family:'Liberation Sans';font-size:11.5px;line-height:11.5px;font-weight:400;font-style:normal;color:#111;transform:scaleX(1.0090);">Εσωτερικά</span>
<div style="left:740px;top:415px;width:622px;height:1px;background:#000"></div>
<div style="left:740px;top:416px;width:622px;height:1px;background:#EEEDD8"></div>
<div style="left:740px;top:441px;width:622px;height:1px;background:#000"></div>
<div style="left:740px;top:442px;width:622px;height:1px;background:#EEEDD8"></div>
<div style="left:740px;top:467px;width:622px;height:1px;background:#000"></div>
<div style="left:740px;top:468px;width:622px;height:1px;background:#EEEDD8"></div>
<div style="left:740px;top:669px;width:622px;height:1px;background:#000"></div>
<div style="left:740px;top:670px;width:622px;height:1px;background:#EEEDD8"></div>
<div style="left:765px;top:394px;width:90px;height:21px;background:#C0C0C0;border-top:1px solid #fff;border-left:1px solid #fff;border-right:1px solid #606060;border-bottom:1px solid #606060;box-shadow:inset -1px -1px 0 #9A9A9A"></div>
<span class="t" style="left:768.00px;top:398.00px;font-family:'Liberation Sans';font-size:13px;line-height:13px;font-weight:700;font-style:normal;color:#111;transform:scaleX(1.0279);">Εξωτ.Γραμμή</span>
<div style="left:893px;top:394px;width:58px;height:21px;background:#C0C0C0;border-top:1px solid #fff;border-left:1px solid #fff;border-right:1px solid #606060;border-bottom:1px solid #606060;box-shadow:inset -1px -1px 0 #9A9A9A"></div>
<span class="t" style="left:895.50px;top:398.00px;font-family:'Liberation Sans';font-size:13px;line-height:13px;font-weight:700;font-style:normal;color:#111;transform:scaleX(0.9719);">Διάρκεια</span>
<div style="left:984px;top:394px;width:62px;height:21px;background:#C0C0C0;border-top:1px solid #fff;border-left:1px solid #fff;border-right:1px solid #606060;border-bottom:1px solid #606060;box-shadow:inset -1px -1px 0 #9A9A9A"></div>
<span class="t" style="left:987.50px;top:398.00px;font-family:'Liberation Sans';font-size:13px;line-height:13px;font-weight:700;font-style:normal;color:#111;transform:scaleX(1.0125);">Μονάδες</span>
<div style="left:1071px;top:394px;width:63px;height:21px;background:#C0C0C0;border-top:1px solid #fff;border-left:1px solid #fff;border-right:1px solid #606060;border-bottom:1px solid #606060;box-shadow:inset -1px -1px 0 #9A9A9A"></div>
<span class="t" style="left:1086.50px;top:398.00px;font-family:'Liberation Sans';font-size:13px;line-height:13px;font-weight:700;font-style:normal;color:#111;transform:scaleX(1.1015);">Αξία</span>
<div style="left:1154px;top:394px;width:51px;height:21px;background:#C0C0C0;border-top:1px solid #fff;border-left:1px solid #fff;border-right:1px solid #606060;border-bottom:1px solid #606060;box-shadow:inset -1px -1px 0 #9A9A9A"></div>
<span class="t" style="left:1175.90px;top:398.00px;font-family:'Liberation Sans';font-size:13px;line-height:13px;font-weight:700;font-style:normal;color:#111;transform:scaleX(0.9912);">OTE</span>
<div style="left:1233px;top:394px;width:64px;height:21px;background:#C0C0C0;border-top:1px solid #fff;border-left:1px solid #fff;border-right:1px solid #606060;border-bottom:1px solid #606060;box-shadow:inset -1px -1px 0 #9A9A9A"></div>
<span class="t" style="left:1235.80px;top:398.00px;font-family:'Liberation Sans';font-size:13px;line-height:13px;font-weight:700;font-style:normal;color:#111;transform:scaleX(1.0066);">Αξία OTE</span>
<div style="left:795px;top:418px;width:41px;height:20px;background:#C0C0C0;border:1px solid #fff;border-top-color:#A8A8A8;border-left-color:#A8A8A8;box-shadow:inset 1px 1px 0 #fff"></div>
<span class="t" style="left:827.81px;top:422.00px;font-family:'Liberation Sans';font-size:12px;line-height:12px;font-weight:400;font-style:normal;color:#111;transform:scaleX(1.0000);">1</span>
<div style="left:889px;top:418px;width:51px;height:20px;background:#C0C0C0;border:1px solid #fff;border-top-color:#A8A8A8;border-left-color:#A8A8A8;box-shadow:inset 1px 1px 0 #fff"></div>
<span class="t" style="left:901.80px;top:422.00px;font-family:'Liberation Sans';font-size:12px;line-height:12px;font-weight:400;font-style:normal;color:#111;transform:scaleX(1.0000);">221,73</span>
<div style="left:969px;top:418px;width:67px;height:20px;background:#C0C0C0;border:1px solid #fff;border-top-color:#A8A8A8;border-left-color:#A8A8A8;box-shadow:inset 1px 1px 0 #fff"></div>
<span class="t" style="left:1014.47px;top:422.00px;font-family:'Liberation Sans';font-size:12px;line-height:12px;font-weight:400;font-style:normal;color:#111;transform:scaleX(1.0000);">649</span>
<div style="left:1067px;top:418px;width:56px;height:20px;background:#C0C0C0;border:1px solid #fff;border-top-color:#A8A8A8;border-left-color:#A8A8A8;box-shadow:inset 1px 1px 0 #fff"></div>
<span class="t" style="left:1091.47px;top:422.00px;font-family:'Liberation Sans';font-size:12px;line-height:12px;font-weight:400;font-style:normal;color:#111;transform:scaleX(1.0000);">64,90</span>
<div style="left:1150px;top:418px;width:52px;height:20px;background:#C0C0C0;border:1px solid #fff;border-top-color:#A8A8A8;border-left-color:#A8A8A8;box-shadow:inset 1px 1px 0 #fff"></div>
<span class="t" style="left:1180.47px;top:422.00px;font-family:'Liberation Sans';font-size:12px;line-height:12px;font-weight:400;font-style:normal;color:#111;transform:scaleX(1.0000);">649</span>
<div style="left:1229px;top:418px;width:60px;height:20px;background:#C0C0C0;border:1px solid #fff;border-top-color:#A8A8A8;border-left-color:#A8A8A8;box-shadow:inset 1px 1px 0 #fff"></div>
<span class="t" style="left:1257.47px;top:422.00px;font-family:'Liberation Sans';font-size:12px;line-height:12px;font-weight:400;font-style:normal;color:#111;transform:scaleX(1.0000);">19,47</span>
<div style="left:795px;top:444px;width:41px;height:20px;background:#C0C0C0;border:1px solid #fff;border-top-color:#A8A8A8;border-left-color:#A8A8A8;box-shadow:inset 1px 1px 0 #fff"></div>
<span class="t" style="left:827.81px;top:448.00px;font-family:'Liberation Sans';font-size:12px;line-height:12px;font-weight:400;font-style:normal;color:#111;transform:scaleX(1.0000);">2</span>
<div style="left:889px;top:444px;width:51px;height:20px;background:#C0C0C0;border:1px solid #fff;border-top-color:#A8A8A8;border-left-color:#A8A8A8;box-shadow:inset 1px 1px 0 #fff"></div>
<span class="t" style="left:915.14px;top:448.00px;font-family:'Liberation Sans';font-size:12px;line-height:12px;font-weight:400;font-style:normal;color:#111;transform:scaleX(1.0000);">0,58</span>
<div style="left:969px;top:444px;width:67px;height:20px;background:#C0C0C0;border:1px solid #fff;border-top-color:#A8A8A8;border-left-color:#A8A8A8;box-shadow:inset 1px 1px 0 #fff"></div>
<span class="t" style="left:1027.81px;top:448.00px;font-family:'Liberation Sans';font-size:12px;line-height:12px;font-weight:400;font-style:normal;color:#111;transform:scaleX(1.0000);">0</span>
<div style="left:1067px;top:444px;width:56px;height:20px;background:#C0C0C0;border:1px solid #fff;border-top-color:#A8A8A8;border-left-color:#A8A8A8;box-shadow:inset 1px 1px 0 #fff"></div>
<span class="t" style="left:1098.14px;top:448.00px;font-family:'Liberation Sans';font-size:12px;line-height:12px;font-weight:400;font-style:normal;color:#111;transform:scaleX(1.0000);">0,00</span>
<div style="left:1150px;top:444px;width:52px;height:20px;background:#C0C0C0;border:1px solid #fff;border-top-color:#A8A8A8;border-left-color:#A8A8A8;box-shadow:inset 1px 1px 0 #fff"></div>
<span class="t" style="left:1193.81px;top:448.00px;font-family:'Liberation Sans';font-size:12px;line-height:12px;font-weight:400;font-style:normal;color:#111;transform:scaleX(1.0000);">0</span>
<div style="left:1229px;top:444px;width:60px;height:20px;background:#C0C0C0;border:1px solid #fff;border-top-color:#A8A8A8;border-left-color:#A8A8A8;box-shadow:inset 1px 1px 0 #fff"></div>
<span class="t" style="left:1264.14px;top:448.00px;font-family:'Liberation Sans';font-size:12px;line-height:12px;font-weight:400;font-style:normal;color:#111;transform:scaleX(1.0000);">0,00</span>
<div style="left:827px;top:420px;width:5px;height:14px;background:#000"></div>
<span class="t" style="left:826.61px;top:422.00px;font-family:'Liberation Sans';font-size:12px;line-height:12px;font-weight:400;font-style:normal;color:#D8F0D0;transform:scaleX(1.0000);">1</span>
<div style="left:757px;top:676px;width:97px;height:20px;background:#C0C0C0;border-top:1px solid #fff;border-left:1px solid #fff;border-right:1px solid #606060;border-bottom:1px solid #606060;box-shadow:inset -1px -1px 0 #9A9A9A"></div>
<span class="t" style="left:759.50px;top:680.00px;font-family:'Liberation Sans';font-size:11.5px;line-height:11.5px;font-weight:700;font-style:normal;color:#8B0A0A;transform:scaleX(0.9898);">Γενικό Σύνολο:</span>
<div style="left:889px;top:676px;width:53px;height:21px;background:#C0C0C0;border:1px solid #fff;border-top-color:#A8A8A8;border-left-color:#A8A8A8;box-shadow:inset 1px 1px 0 #fff"></div>
<span class="t" style="left:903.80px;top:680.00px;font-family:'Liberation Sans';font-size:12px;line-height:12px;font-weight:400;font-style:normal;color:#111;transform:scaleX(1.0000);">222,32</span>
<div style="left:969px;top:676px;width:65px;height:21px;background:#C0C0C0;border:1px solid #fff;border-top-color:#A8A8A8;border-left-color:#A8A8A8;box-shadow:inset 1px 1px 0 #fff"></div>
<span class="t" style="left:1012.47px;top:680.00px;font-family:'Liberation Sans';font-size:12px;line-height:12px;font-weight:400;font-style:normal;color:#111;transform:scaleX(1.0000);">649</span>
<div style="left:1067px;top:676px;width:55px;height:21px;background:#C0C0C0;border:1px solid #fff;border-top-color:#A8A8A8;border-left-color:#A8A8A8;box-shadow:inset 1px 1px 0 #fff"></div>
<span class="t" style="left:1090.47px;top:680.00px;font-family:'Liberation Sans';font-size:12px;line-height:12px;font-weight:400;font-style:normal;color:#111;transform:scaleX(1.0000);">64,90</span>
<div style="left:1150px;top:676px;width:51px;height:21px;background:#C0C0C0;border:1px solid #fff;border-top-color:#A8A8A8;border-left-color:#A8A8A8;box-shadow:inset 1px 1px 0 #fff"></div>
<span class="t" style="left:1179.47px;top:680.00px;font-family:'Liberation Sans';font-size:12px;line-height:12px;font-weight:400;font-style:normal;color:#111;transform:scaleX(1.0000);">649</span>
<div style="left:1229px;top:676px;width:59px;height:21px;background:#C0C0C0;border:1px solid #fff;border-top-color:#A8A8A8;border-left-color:#A8A8A8;box-shadow:inset 1px 1px 0 #fff"></div>
<span class="t" style="left:1256.47px;top:680.00px;font-family:'Liberation Sans';font-size:12px;line-height:12px;font-weight:400;font-style:normal;color:#111;transform:scaleX(1.0000);">19,47</span>
<span class="t" style="left:7.00px;top:712.00px;font-family:'Liberation Sans';font-size:11.5px;line-height:11.5px;font-weight:400;font-style:normal;color:#4A4A4A;transform:scaleX(1.0497);">Προβολή φόρμας</span>
<span class="t" style="left:1134.00px;top:712.00px;font-family:'Liberation Sans';font-size:11.5px;line-height:11.5px;font-weight:400;font-style:normal;color:#4A4A4A;transform:scaleX(1.0160);">Κλείδωμα αριθμών</span>
<div style="left:1251px;top:707px;width:38px;height:20px;background:#D4D4D4"></div>
<svg style="left:1255;top:706" width="105" height="21" viewBox="1255 706 105 21">
<g stroke="#555" stroke-width="1" fill="none">
<rect x="1263.5" y="710.5" width="13" height="12"/>
<path d="M1263.5 713 H1276.5" stroke-width="2"/>
<path d="M1265.5 716.5 H1268.5 M1265.5 719.5 H1268.5 M1270.5 716.5 H1274.5 M1270.5 719.5 H1274.5"/>
<rect x="1300.5" y="710.5" width="14" height="12"/>
<path d="M1300.5 713.5 H1314.5 M1304.5 710.5 V722.5 M1306.5 716.5 H1312.5 M1306.5 719.5 H1312.5"/>
<path d="M1339.5 710.5 V719.5 H1346 Z M1339.5 719.5 H1352.5 V722.5 H1339.5 Z M1342 721 V722.5 M1345 721 V722.5 M1348 721 V722.5 M1344.5 717.5 L1351 711 L1352.5 712.5 L1346 719 H1344.5 Z"/>
</g></svg>
</body></html>
